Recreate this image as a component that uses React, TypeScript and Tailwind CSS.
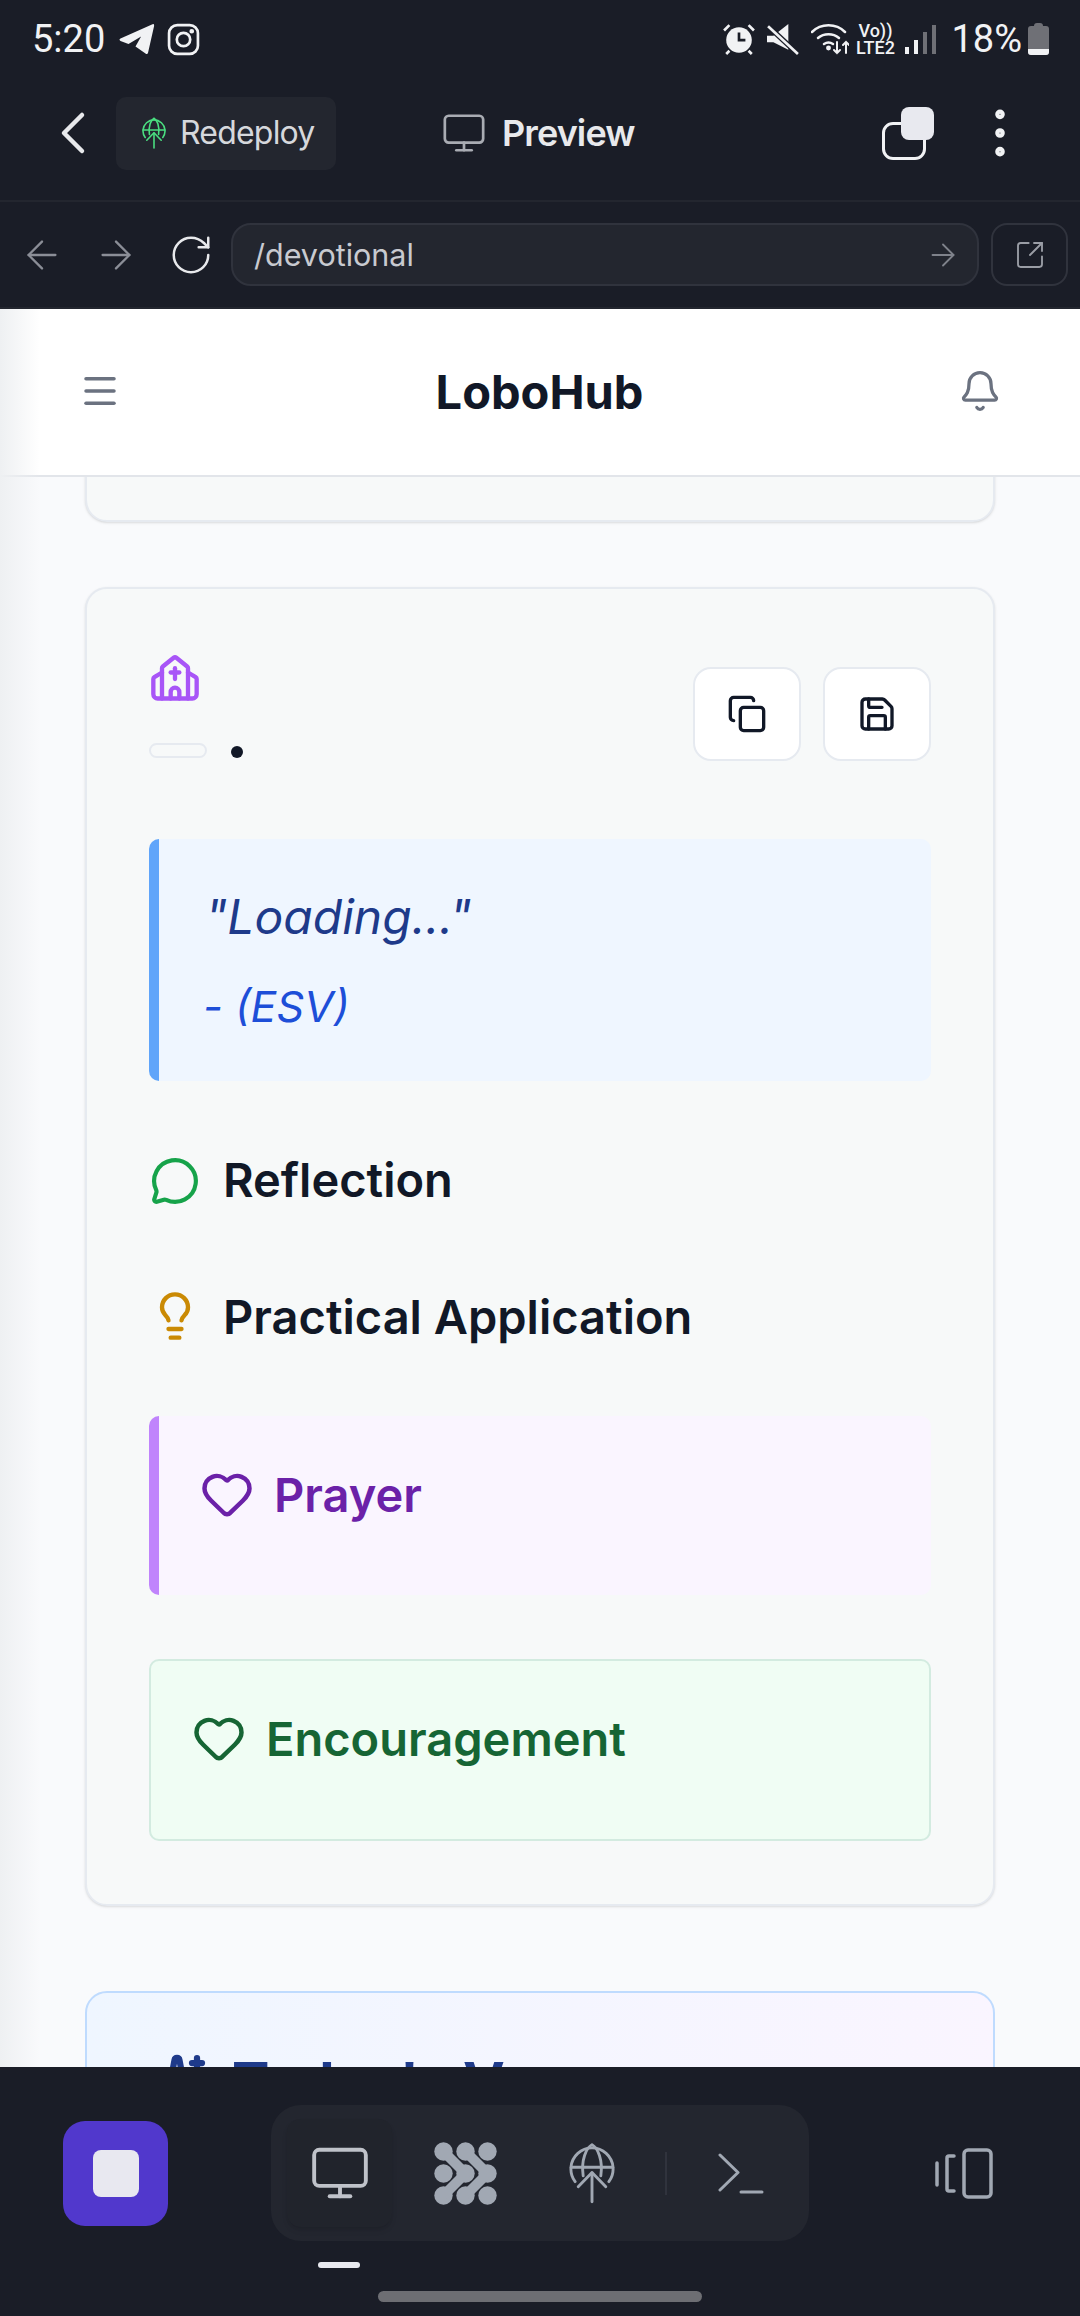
import {
  ArrowLeft,
  ArrowRight,
  Bell,
  ChevronLeft,
  Church,
  Copy,
  EllipsisVertical,
  Heart,
  Lightbulb,
  Menu,
  MessageCircle,
  Monitor,
  RotateCw,
  Save,
  Sparkles,
  SquareArrowOutUpRight,
} from 'lucide-react'

const GlobeUp = ({ className, strokeWidth = 1.5 }: { className: string; strokeWidth?: number }) => (
  <svg viewBox="0 0 24 32" fill="none" stroke="currentColor" strokeWidth={strokeWidth} strokeLinecap="round" strokeLinejoin="round" className={className}>
    <path d="M3.2 20.5a11 11 0 1 1 17.6 0" />
    <path d="M7.4 17.5C6.2 9 9 3 12 1.2 15 3 17.8 9 16.6 17.5" />
    <path d="M1.2 13h21.6" />
    <path d="M4.8 23.2 12 15.8l7.2 7.4" />
    <path d="M12 16v15" />
  </svg>
)

const Molecule = ({ className }: { className: string }) => (
  <svg viewBox="0 0 63 63" className={className} fill="currentColor">
    {[[9.5, 9.5], [31.5, 9.5], [53.5, 9.5], [9.5, 31.5], [31.5, 31.5], [53.5, 31.5], [9.5, 53.5], [31.5, 53.5], [53.5, 53.5]].map(([cx, cy]) => (
      <circle key={`${cx}-${cy}`} cx={cx} cy={cy} r={9.2} />
    ))}
    <path d="M9.5 9.5 31.5 31.5 9.5 53.5M31.5 9.5 53.5 31.5 31.5 53.5" fill="none" stroke="currentColor" strokeWidth={10} strokeLinejoin="round" />
  </svg>
)

const StatusBar = () => (
  <div className="flex h-[70px] items-center justify-between pl-[32px] pr-[31px] pt-[8px] text-[#f1f2f4]" style={{ fontFamily: 'Roboto, sans-serif' }}>
    <div className="flex items-center">
      <span className="w-[74px] text-[38px] leading-none">5:20</span>
      <svg viewBox="0 0 36 32" fill="currentColor" className="ml-[12px] h-[32px] w-[37px]">
        <path d="M34 1.2Q36 .4 35.6 3L29.6 29.6Q29 32 27 30.6L17 23.4 22.6 13.4 10 21 2 18Q0 16.6 2 15.6Z" />
      </svg>
      <svg viewBox="0 0 32 32" fill="none" stroke="currentColor" strokeWidth={2.6} className="ml-[12px] h-[33px] w-[33px]">
        <rect x="2" y="2" width="28" height="28" rx="8" />
        <circle cx="16" cy="16" r="6.5" />
        <circle cx="24" cy="8" r="1" fill="currentColor" />
      </svg>
    </div>
    <div className="flex items-center">
      <svg viewBox="0 0 30 30" className="h-[32px] w-[32px]" fill="currentColor">
        <circle cx="15" cy="16" r="12" />
        <path d="M15 9v7h6" stroke="#1a1d27" strokeWidth="2.5" fill="none" />
        <path d="M1 7l5-5M29 7l-5-5M6 26l-3 3M24 26l3 3" stroke="currentColor" strokeWidth="2.5" />
      </svg>
      <svg viewBox="0 0 30 30" className="ml-[12px] h-[32px] w-[32px]" fill="currentColor">
        <path d="M0 12h6l14-11v24l-14-7H0z" />
        <path d="M1 3l28 26" stroke="#1a1d27" strokeWidth="5" />
        <path d="M1 3l28 26" stroke="currentColor" strokeWidth="2.5" />
      </svg>
      <svg viewBox="0 0 38 32" className="ml-[12px] h-[32px] w-[38px]" fill="none" stroke="currentColor" strokeWidth="2.5" strokeLinecap="round">
        <path d="M1 9c9-9 24-9 33 0" />
        <path d="M7 15c6-5 15-5 21 0" />
        <path d="M13 21c3-2 6-2 9 0" />
        <circle cx="17.5" cy="25" r="1.2" fill="currentColor" />
        <path d="M26 19v11m-3-3 3 3 3-3M35 30V19m-3 3 3-3 3 3" strokeWidth="2" />
      </svg>
      <div className="ml-[5px] flex w-[42px] flex-col items-center text-[18px] font-medium leading-[17px]">
        <span>Vo))</span>
        <span>LTE2</span>
      </div>
      <div className="ml-[9px] flex h-[30px] items-end gap-[5px]">
        <span className="h-[7px] w-[4px] bg-[#f1f2f4]" />
        <span className="h-[14px] w-[4px] bg-[#f1f2f4]" />
        <span className="h-[22px] w-[4px] bg-[#6f7076]" />
        <span className="h-[29px] w-[4px] bg-[#6f7076]" />
      </div>
      <span className="ml-[15px] text-[38px] leading-none">18%</span>
      <div className="ml-[6px] flex flex-col items-center">
        <span className="h-[3px] w-[9px] rounded-t-sm bg-[#6f7076]" />
        <div className="flex h-[29px] w-[21px] flex-col justify-end overflow-hidden rounded-[3px] bg-[#6f7076]">
          <span className="h-[6px] bg-[#f1f2f4]" />
        </div>
      </div>
    </div>
  </div>
)

const PreviewBar = () => (
  <div className="flex h-[132px] items-center border-b-2 border-[#23262f] pb-[4px] text-[#e8e9ec]">
    <ChevronLeft className="ml-[37px] h-[72px] w-[72px] shrink-0" strokeWidth={1.5} />
    <div className="ml-[7px] flex h-[73px] w-[220px] shrink-0 items-center rounded-[10px] bg-[#23262f] pl-[26px]">
      <GlobeUp className="h-[32px] w-[24px] text-[#4ade80]" strokeWidth={1.6} />
      <span className="ml-[14px] text-[32px] tracking-tight text-[#d6d8dc]">Redeploy</span>
    </div>
    <Monitor className="ml-[105px] h-[46px] w-[46px] shrink-0 text-[#a9acb3]" strokeWidth={1.4} />
    <span className="ml-[15px] w-[134px] text-[36px] font-semibold tracking-tight">Preview</span>
    <div className="relative ml-[246px] h-[53px] w-[52px] shrink-0">
      <div className="absolute bottom-0 left-0 h-[38px] w-[44px] rounded-[11px] border-[3px] border-[#f1f2f4]" />
      <div className="absolute right-0 top-0 h-[33px] w-[33px] rounded-[8px] bg-[#e8e9ef]" />
    </div>
    <EllipsisVertical className="ml-[34px] h-[64px] w-[64px] shrink-0 text-[#f1f2f4]" strokeWidth={1.6} />
  </div>
)

const AddressBar = () => (
  <div className="flex h-[107px] items-center border-b-2 border-[#23262f] pl-[19px] pr-[12px]">
    <ArrowLeft className="h-[46px] w-[46px] shrink-0 text-[#8b8e97]" strokeWidth={1.2} />
    <ArrowRight className="ml-[28px] h-[46px] w-[46px] shrink-0 text-[#8b8e97]" strokeWidth={1.2} />
    <RotateCw className="ml-[29px] h-[46px] w-[46px] shrink-0 text-[#e8e9ec]" strokeWidth={1.3} />
    <div className="ml-[17px] flex h-[63px] w-[748px] shrink-0 items-center justify-between rounded-[20px] border-2 border-[#30333d] bg-[#23262f] pl-[21px] pr-[16px]">
      <span className="text-[30.5px] text-[#c8cad0]">/devotional</span>
      <ArrowRight className="h-[36px] w-[36px] text-[#7f828b]" strokeWidth={1.2} />
    </div>
    <div className="ml-[12px] flex h-[63px] w-[77px] shrink-0 items-center justify-center rounded-[16px] border-2 border-[#30333d]">
      <SquareArrowOutUpRight className="h-[32px] w-[32px] text-[#9a9da5]" strokeWidth={1.4} />
    </div>
  </div>
)

const AppHeader = () => (
  <header className="relative z-10 flex h-[168px] shrink-0 items-center justify-between border-b-2 border-[#e2e5ea] bg-white pb-[2px] pl-[79px] pr-[78px]">
    <Menu className="h-[42px] w-[42px] text-[#6b7280]" strokeWidth={2} />
    <h1 className="text-[47px] font-bold leading-none text-[#111827]">LoboHub</h1>
    <Bell className="h-[44px] w-[44px] text-[#6b7280]" strokeWidth={1.8} />
  </header>
)

const IconButton = ({ children }: { children: React.ReactNode }) => (
  <div className="flex h-[94px] w-[108px] items-center justify-center rounded-[18px] border-2 border-[#e6eaf0] bg-white text-[#111827]">
    {children}
  </div>
)

const DevotionalCard = () => (
  <section className="mt-[65px] h-[1319px] shrink-0 rounded-[22px] border-2 border-[#e6eaf0] bg-[#f7f9f9] px-[62px] pt-[64px] shadow-sm">
    <div className="flex justify-between">
      <div>
        <Church className="h-[52px] w-[52px] text-[#a855f7]" strokeWidth={2} />
        <div className="mt-[38px] flex items-center">
          <span className="h-[15px] w-[58px] rounded-full border-2 border-[#e6eaf0]" />
          <span className="ml-[24px] mt-[3px] h-[12px] w-[12px] rounded-full bg-[#111827]" />
        </div>
      </div>
      <div className="mt-[14px] flex gap-[22px]">
        <IconButton><Copy className="h-[40px] w-[40px]" strokeWidth={2} /></IconButton>
        <IconButton><Save className="h-[40px] w-[40px]" strokeWidth={2} /></IconButton>
      </div>
    </div>

    <div className="mt-[78px] h-[242px] rounded-[10px] border-l-[10px] border-[#60a5fa] bg-[#eff6ff] pl-[46px] pt-[50px]">
      <p className="text-[48px] italic leading-[56px] text-[#1e3a8a]">"Loading..."</p>
      <p className="-ml-[2px] mt-[37px] text-[43px] italic leading-[48px] text-[#1d4ed8]">- (ESV)</p>
    </div>

    <div className="mt-[70px] flex h-[56px] items-center">
      <MessageCircle className="ml-[1px] mt-[4px] h-[50px] w-[50px] text-[#16a34a]" strokeWidth={2} />
      <h3 className="ml-[23px] text-[47px] font-semibold leading-none text-[#111827]">Reflection</h3>
    </div>
    <div className="mt-[81px] flex h-[56px] items-center">
      <Lightbulb className="h-[52px] w-[52px] text-[#ca8a04]" strokeWidth={2} />
      <h3 className="ml-[22px] text-[47px] font-semibold leading-none text-[#111827]">Practical Application</h3>
    </div>

    <div className="mt-[72px] h-[179px] rounded-[10px] border-l-[10px] border-[#c084fc] bg-[#faf5ff] pl-[41px] pt-[50px]">
      <div className="flex h-[56px] items-center">
        <Heart className="h-[54px] w-[54px] text-[#6b21a8]" strokeWidth={2} />
        <h3 className="ml-[20px] text-[47px] font-semibold leading-none text-[#6b21a8]">Prayer</h3>
      </div>
    </div>

    <div className="mt-[64px] h-[182px] rounded-[10px] border-2 border-[#d3ebe0] bg-[#f0fdf4] pl-[41px] pt-[49px]">
      <div className="flex h-[56px] items-center">
        <Heart className="h-[54px] w-[54px] text-[#166534]" strokeWidth={2} />
        <h3 className="ml-[20px] text-[47px] font-semibold leading-none text-[#166534]">Encouragement</h3>
      </div>
    </div>
  </section>
)

const BottomBar = () => (
  <div className="relative z-10 flex h-[249px] shrink-0 flex-col bg-[#1a1d27]">
    <div className="mt-[38px] flex items-center">
      <div className="ml-[63px] flex h-[105px] w-[105px] items-center justify-center rounded-[22px] bg-[#5138cc]">
        <span className="h-[47px] w-[46px] rounded-[8px] bg-[#e8e8f0]" />
      </div>
      <div className="ml-[103px] flex h-[136px] w-[538px] items-center rounded-[30px] bg-[#23262f] pl-[16px]">
        <div className="flex h-[108px] w-[105px] items-center justify-center rounded-[14px] bg-[#21242c] shadow-md">
          <Monitor className="h-[62px] w-[62px] text-[#bfc2c9]" strokeWidth={1.5} />
        </div>
        <Molecule className="ml-[42px] h-[63px] w-[63px] text-[#a1a8b3]" />
        <GlobeUp className="ml-[72px] h-[62px] w-[46px] text-[#a1a8b3]" />
        <span className="ml-[50px] h-[43px] w-[2px] bg-[#30333d]" />
        <svg viewBox="0 0 46 41" fill="none" stroke="currentColor" strokeWidth="3" strokeLinecap="round" strokeLinejoin="round" className="ml-[51px] h-[41px] w-[46px] text-[#a1a8b3]">
          <path d="M2 2l18 17.5L2 37" />
          <path d="M23 39h21" />
        </svg>
      </div>
      <svg viewBox="0 0 58 51" fill="none" stroke="currentColor" strokeWidth="3.5" strokeLinecap="round" strokeLinejoin="round" className="ml-[126px] h-[51px] w-[58px] text-[#a1a8b3]">
        <path d="M2 15v22" />
        <path d="M19 8h-5a2 2 0 0 0-2 2v31a2 2 0 0 0 2 2h5" />
        <rect x="29" y="2" width="27" height="47" rx="4" />
      </svg>
    </div>
    <span className="ml-[318px] mt-[21px] h-[6px] w-[42px] rounded-full bg-[#e8e9ef]" />
    <span className="ml-[378px] mt-[23px] h-[11px] w-[324px] rounded-full bg-[#6d6e73]" />
  </div>
)

export default function App() {
  return (
    <div className="relative flex h-[2316px] w-[1080px] flex-col overflow-hidden bg-[#f9fafc]" style={{ fontFamily: 'Inter, sans-serif' }}>
      <div className="shrink-0 bg-[#1a1d27]">
        <StatusBar />
        <PreviewBar />
        <AddressBar />
      </div>
      <AppHeader />
      <main className="flex min-h-0 flex-1 flex-col overflow-hidden px-[85px]">
        <div className="-mt-[60px] h-[105px] shrink-0 rounded-[22px] border-2 border-[#e6eaf0] bg-[#f7f9f9] shadow-sm" />
        <DevotionalCard />
        <section className="mt-[85px] h-[300px] shrink-0 rounded-[22px] border-2 border-[#bfdbfe] bg-gradient-to-r from-[#eff6ff] to-[#faf5ff] pl-[60px] pt-[60px]">
          <div className="flex items-center text-[#1e3a8a]">
            <Sparkles className="h-[60px] w-[60px] shrink-0" strokeWidth={2.5} />
            <h2 className="ml-[25px] text-[56px] font-bold leading-none">Today's Verse</h2>
          </div>
        </section>
      </main>
      <BottomBar />
      <div className="pointer-events-none absolute bottom-[249px] left-0 top-[309px] z-20 w-[40px] bg-gradient-to-r from-[#eef0f2] to-transparent" />
    </div>
  )
}
